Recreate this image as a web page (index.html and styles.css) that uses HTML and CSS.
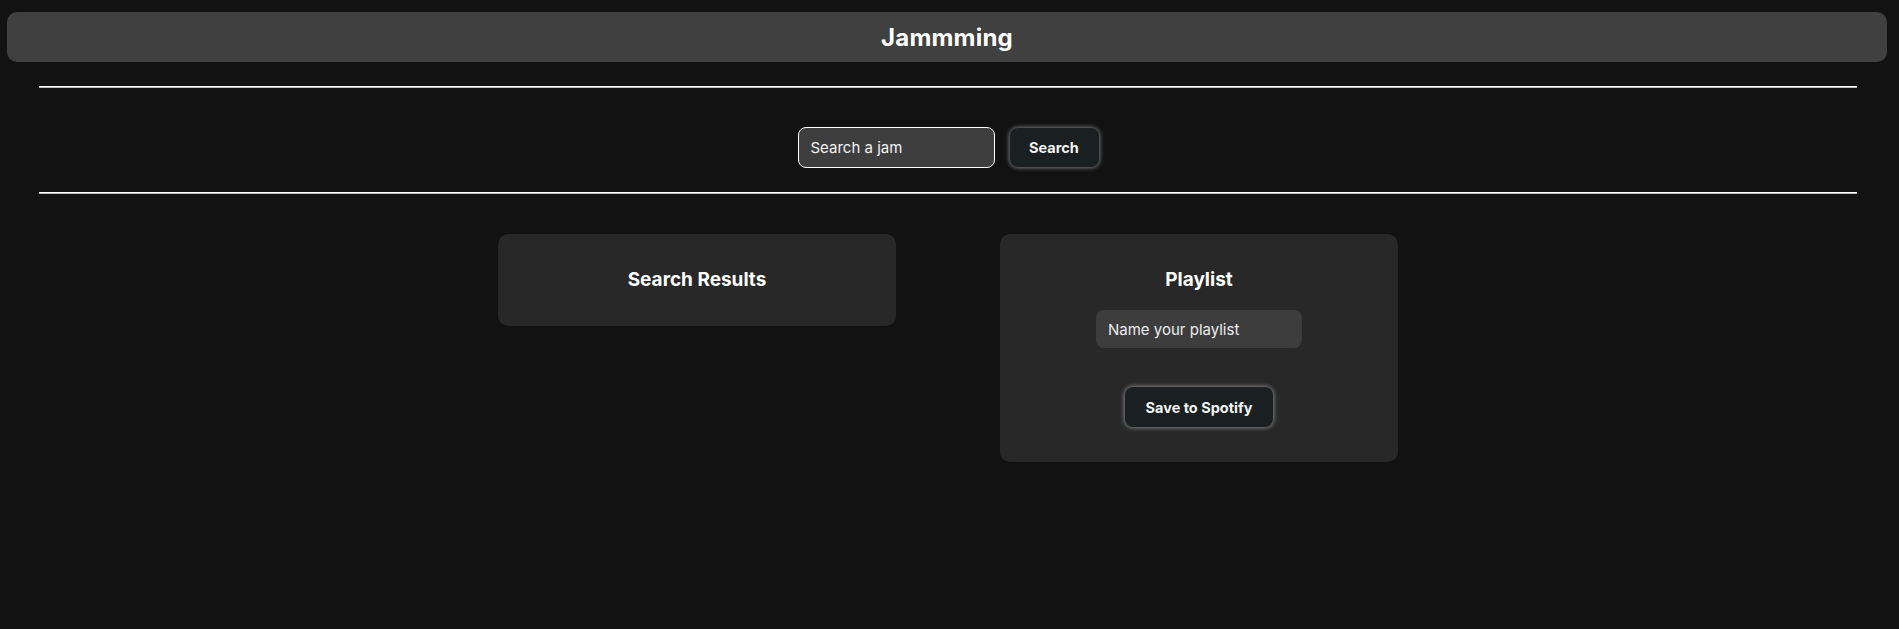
FILE: index.html
```html
<!DOCTYPE html>
<html lang="en">
<head>
<meta charset="utf-8">
<title>Jammming</title>
<link rel="stylesheet" href="styles.css">
</head>
<body>
<header class="app-header"><h1 class="app-title">Jammming</h1></header>
<div class="rule"></div>
<section class="search-bar">
  <input class="search-input" type="text" placeholder="Search a jam">
  <button class="btn search-btn">Search</button>
</section>
<div class="rule"></div>
<main class="panels">
  <section class="card results">
    <h2 class="card-title">Search Results</h2>
  </section>
  <section class="card playlist">
    <h2 class="card-title">Playlist</h2>
    <input class="playlist-input" type="text" value="Name your playlist">
    <button class="btn save-btn">Save to Spotify</button>
  </section>
</main>
</body>
</html>
```
FILE: styles.css
```css
* { box-sizing: border-box; }
body {
  margin: 0;
  padding-right: 3px;
  background: #121212;
  color: #fff;
  font-family: Inter, "Liberation Sans", sans-serif;
}
.app-header {
  margin: 12px 9px 0 7px;
  height: 50px;
  background: #404040;
  border-radius: 10px;
  display: flex;
  align-items: center;
  justify-content: center;
}
.app-title {
  margin: 0;
  font-size: 24px;
  font-weight: 700;
  letter-spacing: 0.2px;
}
.rule {
  margin: 24px 39px 0;
  height: 2px;
  border-top: 1px solid #fff;
  background: #bdbdbd;
}
.search-bar {
  display: flex;
  justify-content: center;
  align-items: center;
  gap: 15px;
  padding: 39px 0 0;
}
.search-input {
  width: 197px;
  height: 41px;
  border: 1px solid #fff;
  border-radius: 8px;
  background: #3e3e3e;
  color: #fff;
  padding: 0 12px;
  font-family: inherit;
  font-size: 15px;
  outline: none;
}
.search-input::placeholder { color: #f2f2f2; opacity: 1; }
.btn {
  border: none;
  border-radius: 8px;
  background: #1a2022;
  color: #f4f4f4;
  font-family: inherit;
  font-weight: 700;
  font-size: 14.5px;
  box-shadow: 0 0 4px 1px rgba(200, 200, 200, 0.55);
}
.search-btn { width: 89px; height: 39px; }
.panels {
  display: flex;
  justify-content: center;
  align-items: flex-start;
  gap: 104px;
  margin-top: 40px;
}
.card {
  width: 398px;
  background: #282828;
  border-radius: 10px;
  display: flex;
  flex-direction: column;
  align-items: center;
  padding: 34px 0;
}
.card-title {
  margin: 0;
  font-size: 19px;
  line-height: 24px;
  font-weight: 700;
}
.playlist { padding-bottom: 35px; }
.playlist-input {
  margin-top: 18px;
  width: 206px;
  height: 38px;
  border: none;
  border-radius: 8px;
  background: #3d3d3d;
  color: #ececec;
  padding: 0 12px;
  font-family: inherit;
  font-size: 15px;
  outline: none;
}
.save-btn { margin-top: 39px; width: 148px; height: 40px; }
```
